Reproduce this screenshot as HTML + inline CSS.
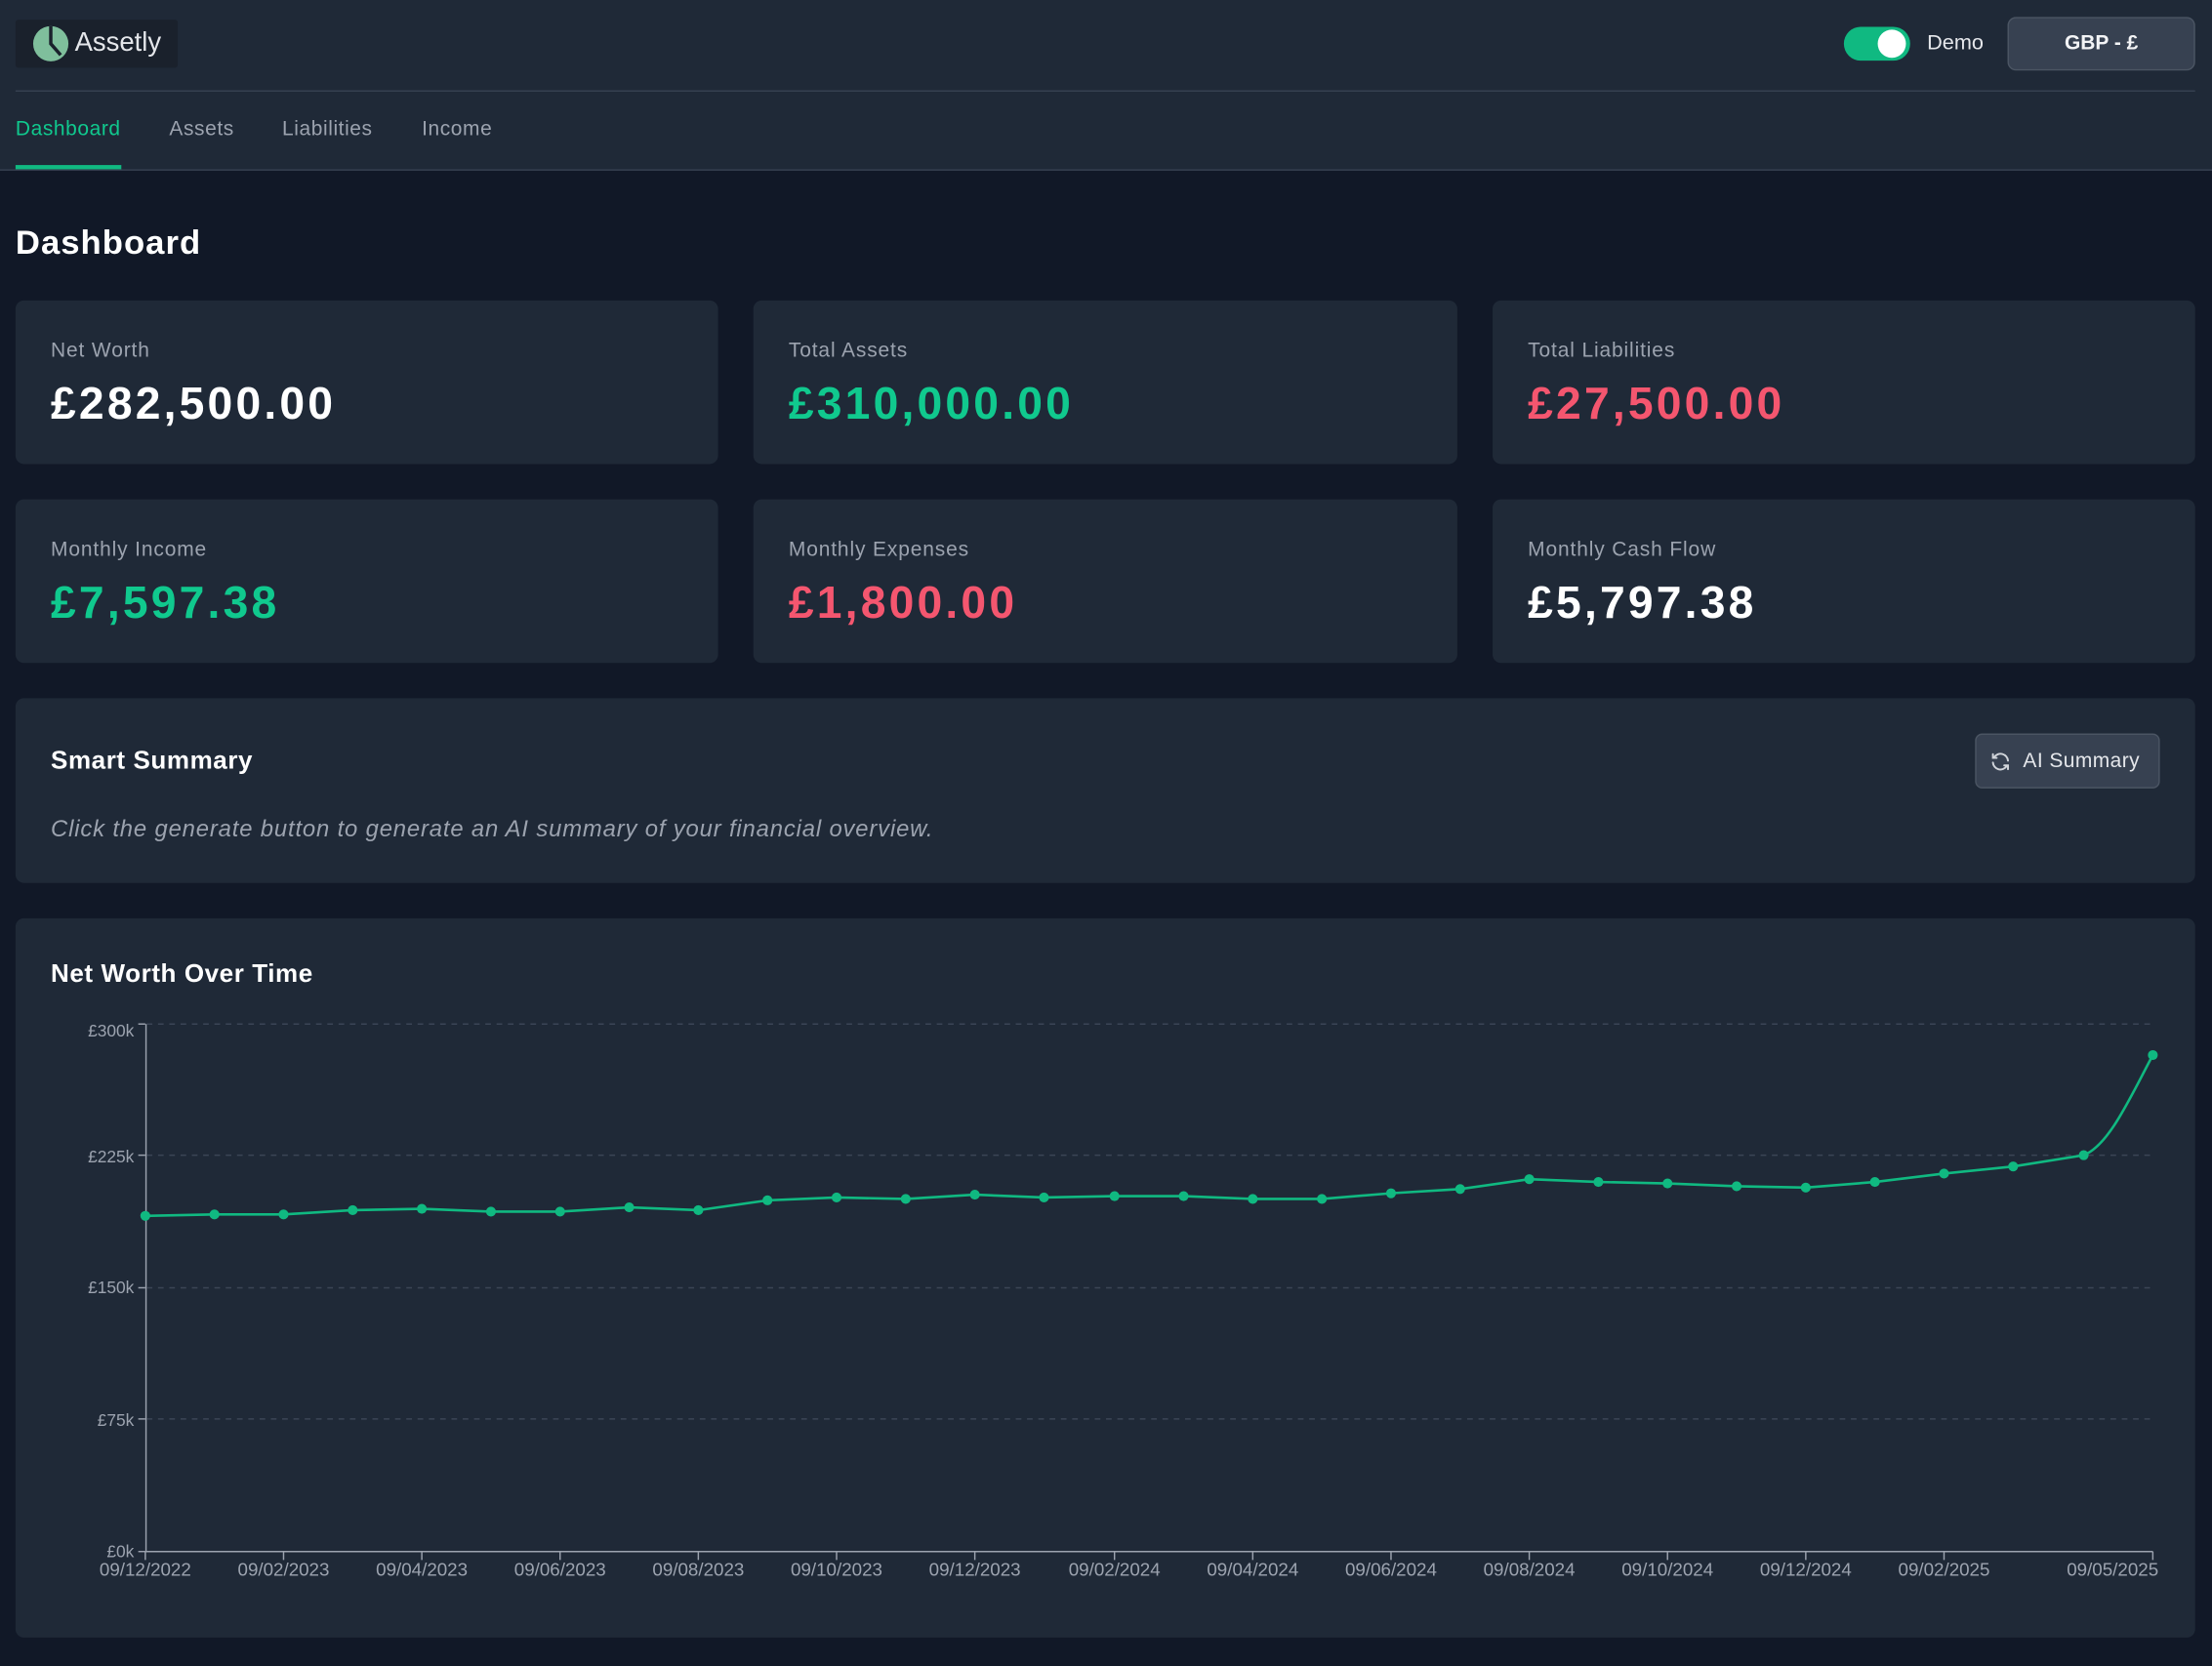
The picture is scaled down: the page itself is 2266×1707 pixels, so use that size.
<!DOCTYPE html>
<html><head><meta charset="utf-8">
<style>
*{margin:0;padding:0;box-sizing:border-box}
html,body{width:2266px;height:1706px;overflow:hidden;background:#111827}
body{font-family:"Liberation Sans",sans-serif}
#w{position:absolute;left:0;top:0;width:1568px;height:1181px;transform:scale(1.4452);transform-origin:0 0;background:#111827}
.hdr{position:absolute;left:0;top:0;width:1568px;height:121px;background:#1f2937;border-bottom:1px solid #374151}
.sep{position:absolute;left:11px;right:12px;top:64px;height:1px;background:#374151}
.logo{position:absolute;left:11px;top:14px;width:115px;height:34px;background:#1a212c;border-radius:2px}
.logo span{position:absolute;left:42px;top:6px;font-size:19px;color:#e5e7eb}
.tab{position:absolute;top:84px;font-size:14.5px;color:#9ca3af;letter-spacing:0.4px}
.card{position:absolute;background:#1f2937;border-radius:6px}
.lbl{position:absolute;left:25px;top:28px;font-size:14.5px;color:#9ca3af;letter-spacing:0.6px}
.val{position:absolute;left:25px;top:55px;font-size:32px;font-weight:bold;color:#fff;letter-spacing:2.2px}
.g{color:#10c98e}.r{color:#f4566f}
</style></head><body><div id="w">
<div class="hdr">
 <div class="logo"><svg width="28" height="28" viewBox="0 0 28 28" style="position:absolute;left:11px;top:3px"><circle cx="14" cy="14" r="12.5" fill="#7fbf9c"/><path d="M14 1.5 L14 14 L21 22" stroke="#1a212c" stroke-width="2.4" fill="none"/></svg><span>Assetly</span></div>
 <div style="position:absolute;left:1307px;top:19px;width:47px;height:24px;border-radius:12px;background:#10b981"></div>
 <div style="position:absolute;left:1331px;top:21px;width:20px;height:20px;border-radius:10px;background:#fff"></div>
 <div style="position:absolute;left:1366px;top:22px;font-size:15px;color:#e5e7eb">Demo</div>
 <div style="position:absolute;left:1423px;top:12px;width:133px;height:38px;border-radius:6px;background:#374151;border:1px solid #4b5563;color:#f3f4f6;font-size:14.5px;text-align:center;line-height:36px;font-weight:bold">GBP - £</div>
 <div class="sep"></div>
 <div class="tab" style="left:11px;color:#10c98e">Dashboard</div>
 <div style="position:absolute;left:11px;top:117px;width:75px;height:3px;background:#10b981"></div>
 <div class="tab" style="left:120px">Assets</div>
 <div class="tab" style="left:200px">Liabilities</div>
 <div class="tab" style="left:299px">Income</div>
</div>
<div style="position:absolute;left:11px;top:159px;font-size:24px;font-weight:bold;color:#fff;letter-spacing:0.7px">Dashboard</div>

<div class="card" style="left:11px;top:213px;width:498px;height:116px"><div class="lbl">Net Worth</div><div class="val">£282,500.00</div></div>
<div class="card" style="left:534px;top:213px;width:499px;height:116px"><div class="lbl">Total Assets</div><div class="val g">£310,000.00</div></div>
<div class="card" style="left:1058px;top:213px;width:498px;height:116px"><div class="lbl">Total Liabilities</div><div class="val r">£27,500.00</div></div>
<div class="card" style="left:11px;top:354px;width:498px;height:116px"><div class="lbl">Monthly Income</div><div class="val g">£7,597.38</div></div>
<div class="card" style="left:534px;top:354px;width:499px;height:116px"><div class="lbl">Monthly Expenses</div><div class="val r">£1,800.00</div></div>
<div class="card" style="left:1058px;top:354px;width:498px;height:116px"><div class="lbl">Monthly Cash Flow</div><div class="val">£5,797.38</div></div>

<div class="card" style="left:11px;top:495px;width:1545px;height:131px">
 <div style="position:absolute;left:25px;top:34px;font-size:18px;font-weight:bold;color:#fff;letter-spacing:0.4px">Smart Summary</div>
 <div style="position:absolute;left:25px;top:84px;font-size:16.5px;font-style:italic;color:#9ca3af;letter-spacing:0.58px">Click the generate button to generate an AI summary of your financial overview.</div>
 <div style="position:absolute;left:1389px;top:25px;width:131px;height:39px;border-radius:5px;background:#374151;border:1px solid #4b5563">
  <svg width="16" height="16" viewBox="0 0 24 24" style="position:absolute;left:9px;top:11px" fill="none" stroke="#d1d5db" stroke-width="2" stroke-linecap="round"><path d="M20 11a8 8 0 0 0-14.5-4M4 4v4h4M4 13a8 8 0 0 0 14.5 4M20 20v-4h-4"/></svg>
  <div style="position:absolute;left:33px;top:11px;font-size:14.5px;color:#e5e7eb;letter-spacing:0.3px">AI Summary</div>
 </div>
</div>

<div class="card" style="left:11px;top:651px;width:1545px;height:510px">
 <div style="position:absolute;left:25px;top:29px;font-size:18px;font-weight:bold;color:#fff;letter-spacing:0.4px">Net Worth Over Time</div>
</div>
<svg style="position:absolute;left:0;top:0" width="1568" height="1181" viewBox="0 0 1568 1181" font-family="Liberation Sans, sans-serif" font-size="12" fill="#9ca3af">
 <g stroke="#3b4556" stroke-dasharray="4 4" stroke-width="1">
  <line x1="104" y1="726" x2="1526" y2="726"/><line x1="104" y1="819" x2="1526" y2="819"/><line x1="104" y1="913" x2="1526" y2="913"/><line x1="104" y1="1006" x2="1526" y2="1006"/>
 </g>
 <g stroke="#9ca3af" stroke-width="1">
  <line x1="103.5" y1="726" x2="103.5" y2="1100"/><line x1="103" y1="1100" x2="1526" y2="1100"/>
  <line x1="98" y1="726" x2="103" y2="726"/><line x1="98" y1="819" x2="103" y2="819"/><line x1="98" y1="913" x2="103" y2="913"/><line x1="98" y1="1006" x2="103" y2="1006"/><line x1="98" y1="1100" x2="103" y2="1100"/>
  <path d="M103 1100v6M201 1100v6M299 1100v6M397 1100v6M495 1100v6M593 1100v6M691 1100v6M790 1100v6M888 1100v6M986 1100v6M1084 1100v6M1182 1100v6M1280 1100v6M1378 1100v6M1526 1100v6"/>
 </g>
 <g text-anchor="end">
  <text x="95" y="735">£300k</text><text x="95" y="824">£225k</text><text x="95" y="917">£150k</text><text x="95" y="1011">£75k</text><text x="95" y="1104">£0k</text>
 </g>
 <g text-anchor="middle" font-size="13">
  <text x="103" y="1117">09/12/2022</text><text x="201" y="1117">09/02/2023</text><text x="299" y="1117">09/04/2023</text><text x="397" y="1117">09/06/2023</text><text x="495" y="1117">09/08/2023</text><text x="593" y="1117">09/10/2023</text><text x="691" y="1117">09/12/2023</text><text x="790" y="1117">09/02/2024</text><text x="888" y="1117">09/04/2024</text><text x="986" y="1117">09/06/2024</text><text x="1084" y="1117">09/08/2024</text><text x="1182" y="1117">09/10/2024</text><text x="1280" y="1117">09/12/2024</text><text x="1378" y="1117">09/02/2025</text><text x="1530" y="1117" text-anchor="end">09/05/2025</text>
 </g>
 <path fill="none" stroke="#10b981" stroke-width="1.8" d="M103 862L152 861L201 861L250 858L299 857L348 859L397 859L446 856L495 858L544 851L593 849L642 850L691 847L740 849L790 848L839 848L888 850L937 850L986 846L1035 843L1084 836L1133 838L1182 839L1231 841L1280 842L1329 838L1378 832L1427 827L1477 819C1495 812 1510 778 1526 748"/>
 <g fill="#10b981">
  <circle cx="103" cy="862" r="3.5"/><circle cx="152" cy="861" r="3.5"/><circle cx="201" cy="861" r="3.5"/><circle cx="250" cy="858" r="3.5"/><circle cx="299" cy="857" r="3.5"/><circle cx="348" cy="859" r="3.5"/><circle cx="397" cy="859" r="3.5"/><circle cx="446" cy="856" r="3.5"/><circle cx="495" cy="858" r="3.5"/><circle cx="544" cy="851" r="3.5"/><circle cx="593" cy="849" r="3.5"/><circle cx="642" cy="850" r="3.5"/><circle cx="691" cy="847" r="3.5"/><circle cx="740" cy="849" r="3.5"/><circle cx="790" cy="848" r="3.5"/><circle cx="839" cy="848" r="3.5"/><circle cx="888" cy="850" r="3.5"/><circle cx="937" cy="850" r="3.5"/><circle cx="986" cy="846" r="3.5"/><circle cx="1035" cy="843" r="3.5"/><circle cx="1084" cy="836" r="3.5"/><circle cx="1133" cy="838" r="3.5"/><circle cx="1182" cy="839" r="3.5"/><circle cx="1231" cy="841" r="3.5"/><circle cx="1280" cy="842" r="3.5"/><circle cx="1329" cy="838" r="3.5"/><circle cx="1378" cy="832" r="3.5"/><circle cx="1427" cy="827" r="3.5"/><circle cx="1477" cy="819" r="3.5"/><circle cx="1526" cy="748" r="3.5"/>
 </g>
</svg>
</div></body></html>
